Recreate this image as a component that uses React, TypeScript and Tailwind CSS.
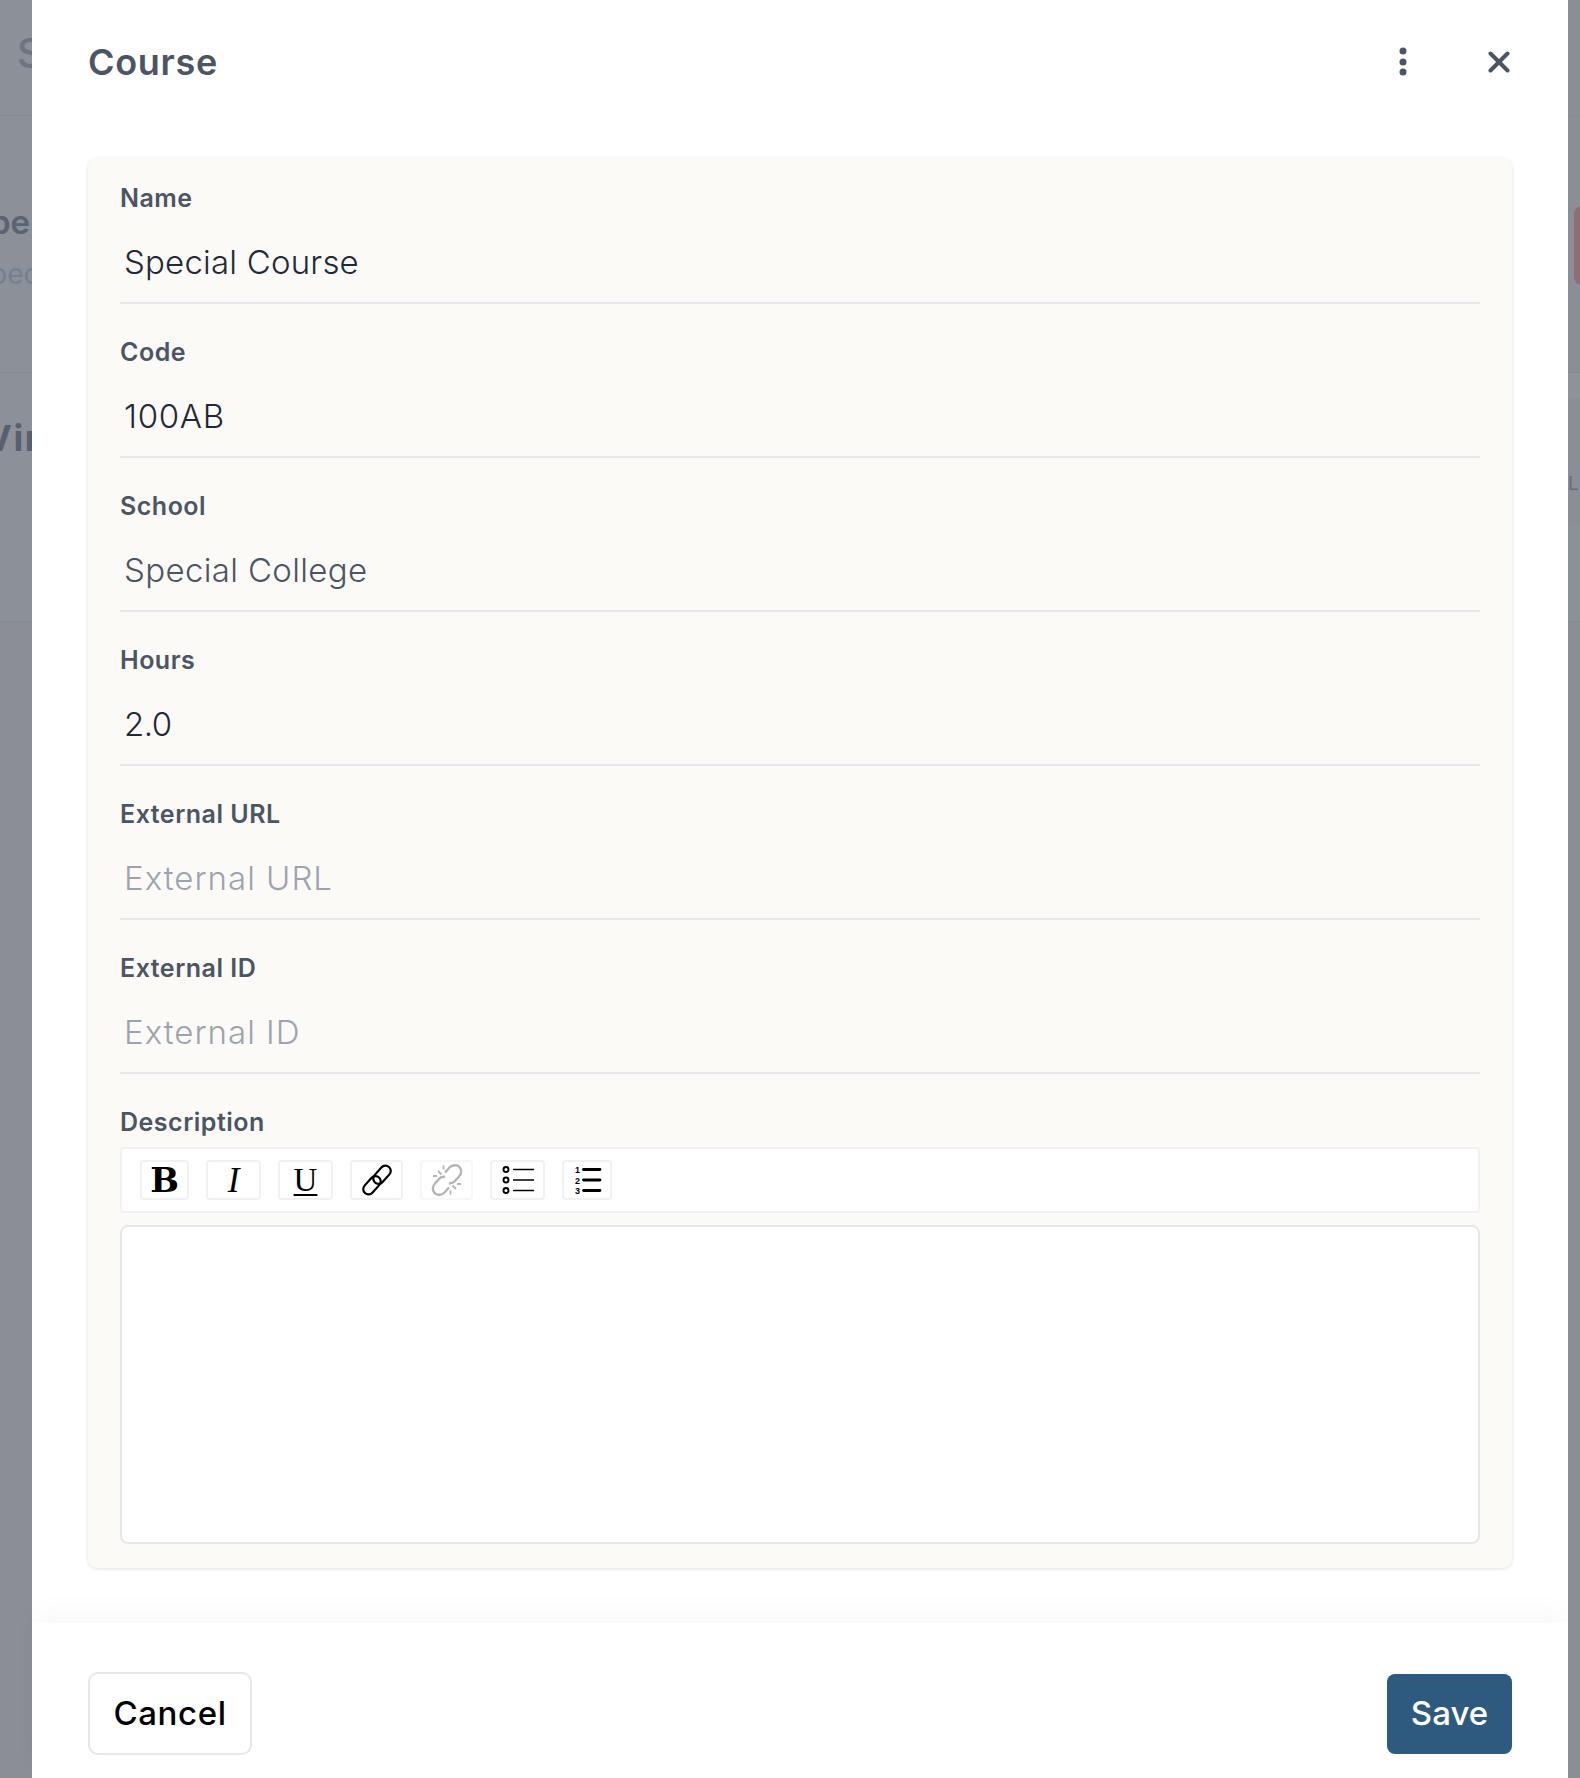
const font = "font-['Inter',sans-serif]";

const fields = [
  { label: "Name", value: "Special Course", tone: "text-[#1f2937] tracking-[0.2px]" },
  { label: "Code", value: "100AB", tone: "text-[#1f2937] tracking-[0.7px]" },
  { label: "School", value: "Special College", tone: "text-[#4b5563] tracking-[0.35px]" },
  { label: "Hours", value: "2.0", tone: "text-[#1f2937] tracking-[-0.5px]" },
  { label: "External URL", value: "External URL", tone: "text-[#9ca3af] tracking-[1px]" },
  { label: "External ID", value: "External ID", tone: "text-[#9ca3af] tracking-[1px]" },
];

function Field({ label, value, tone }: { label: string; value: string; tone: string }) {
  return (
    <div className="mb-[31px]">
      <div className="flex h-[34px] items-center pt-[1px] text-[25px] font-semibold tracking-[0.5px] text-[#4b5563]">{label}</div>
      <div className={`flex h-[89px] items-center border-b-2 border-[#e5e7eb] pt-[9px] pl-[4px] text-[33px] font-light ${tone}`}>
        {value}
      </div>
    </div>
  );
}

function ToolButton({ className, children }: { className: string; children: React.ReactNode }) {
  return (
    <div className={`flex h-[40px] items-center justify-center rounded-[4px] border-2 border-[#f1f1f1] bg-white text-black ${className}`}>
      {children}
    </div>
  );
}

function Toolbar() {
  return (
    <div className="flex h-[66px] items-center gap-[17px] rounded-[4px] border-2 border-[#f1f1f1] bg-white pl-[18px]">
      <ToolButton className="w-[49px] font-['DejaVu_Serif',serif] text-[34px] leading-none font-bold">B</ToolButton>
      <ToolButton className="w-[55px] font-['Liberation_Serif',serif] text-[35px] leading-none italic">I</ToolButton>
      <ToolButton className="w-[55px] font-['Liberation_Serif',serif] text-[33px] leading-none underline decoration-2 underline-offset-[3px]">U</ToolButton>
      <ToolButton className="w-[53px]">
        <svg width="34" height="34" viewBox="0 0 34 34" fill="none" stroke="#000" strokeWidth="2.200">
          <rect x="1.500" y="17" width="21" height="10.500" rx="5.250" transform="rotate(-48 12 22.250)" />
          <rect x="11.500" y="6.500" width="21" height="10.500" rx="5.250" transform="rotate(-48 22 11.750)" />
        </svg>
      </ToolButton>
      <ToolButton className="w-[53px] border-[#f7f7f7]">
        <svg width="36" height="36" viewBox="0 0 36 36" fill="none" stroke="#b4b4b4" strokeWidth="2.400">
          <path d="M16 10.500l4.500-5c3-3 7.500-3 10-.5s2 7-.5 9.500l-4.500 5c-1.500 1.500-3.500 2-5.500 1.500" />
          <path d="M20 25.500l-4.500 5c-3 3-7.500 3-10 .5s-2-7 .5-9.500l4.500-5c1.500-1.500 3.500-2 5.500-1.500" />
          <path strokeWidth="1.800" d="M9 9l3.500 3.500M14.500 3.500v4M4 14h4M27 27l-3.500-3.500M21.500 32.500v-4M32 22h-4" />
        </svg>
      </ToolButton>
      <ToolButton className="w-[55px]">
        <svg width="34" height="30" viewBox="0 0 34 30" fill="none" stroke="#000">
          <circle cx="5" cy="4.500" r="2.500" strokeWidth="1.900" />
          <circle cx="5" cy="15" r="2.500" strokeWidth="1.900" />
          <circle cx="5" cy="25.500" r="2.500" strokeWidth="1.900" />
          <path strokeWidth="1.600" d="M12 4.500h21M12 15h21M12 25.500h21" />
        </svg>
      </ToolButton>
      <ToolButton className="w-[50px]">
        <svg width="32" height="30" viewBox="0 0 32 30" fill="none" stroke="#000">
          <text x="4" y="8" fontSize="9" fontWeight="700" fill="#000" stroke="none" fontFamily="Liberation Sans Narrow, Liberation Sans, sans-serif">1</text>
          <text x="4" y="18.500" fontSize="9" fontWeight="700" fill="#000" stroke="none" fontFamily="Liberation Sans Narrow, Liberation Sans, sans-serif">2</text>
          <text x="4" y="29" fontSize="9" fontWeight="700" fill="#000" stroke="none" fontFamily="Liberation Sans Narrow, Liberation Sans, sans-serif">3</text>
          <path strokeWidth="2.800" strokeLinecap="round" d="M12.500 4.500h16.500M12.500 15h16.500M12.500 25.500h16.500" />
        </svg>
      </ToolButton>
    </div>
  );
}

function LeftBackdrop() {
  return (
    <div className="flex w-8 shrink-0 flex-col overflow-hidden bg-[#8c9099] whitespace-nowrap">
      <div className="h-[116px] border-b border-[#868a93] pt-[33px] pl-[17px] text-[40px] leading-[40px] font-medium text-[#6b7483]">S</div>
      <div className="h-[257px] border-b border-[#868a93] pt-[86px]">
        <div className="-ml-[10px] text-[33px] leading-[40px] font-semibold text-[#5a6372]">pe</div>
        <div className="mt-[16px] -ml-[10px] text-[28px] leading-[32px] text-[#74808f]">pec</div>
      </div>
      <div className="h-[249px] border-b border-[#868a93] pt-[43px]">
        <div className="-ml-[15px] text-[36px] leading-[44px] font-bold tracking-[1.500px] text-[#56606f]">Vir</div>
      </div>
      <div className="flex-1 bg-[#8b8e97]" />
    </div>
  );
}

function RightBackdrop() {
  return (
    <div className="flex w-3 shrink-0 flex-col overflow-hidden bg-[#8b8e97] whitespace-nowrap">
      <div className="h-[116px] border-b border-[#868a93]" />
      <div className="h-[257px] border-b border-[#868a93] pt-[90px] pl-[6px]">
        <div className="h-[79px] w-4 rounded-[8px] bg-[#8d6f6f]" />
      </div>
      <div className="h-[24px] bg-[#8e929b]" />
      <div className="h-[128px] pt-[74px] text-[19px] leading-[26px] text-[#666d7a]">LE</div>
      <div className="h-[97px] border-b border-[#868a93] bg-[#8b9199]" />
      <div className="flex-1" />
    </div>
  );
}

export default function App() {
  return (
    <div className={`flex h-[1778px] w-full overflow-hidden bg-[#8b8e97] ${font}`}>
      <LeftBackdrop />
      <div className="flex min-w-0 flex-1 flex-col bg-white">
        <div className="flex h-[158px] shrink-0 items-start justify-between pt-[40px] pr-[56px] pl-[56px]">
          <h1 className="text-[36px] leading-[44px] font-semibold tracking-[0.7px] text-[#4b5563]">Course</h1>
          <div className="flex items-center gap-[81px] pt-[7px] pr-[2px]">
            <svg width="8" height="30" viewBox="0 0 8 30" fill="#4b5563">
              <circle cx="4" cy="4" r="3.500" />
              <circle cx="4" cy="15" r="3.500" />
              <circle cx="4" cy="25" r="3.500" />
            </svg>
            <svg width="22" height="22" viewBox="0 0 22 22" fill="none" stroke="#4b5563" strokeWidth="4" strokeLinecap="round">
              <path d="M2.500 2.500l17 17M19.500 2.500l-17 17" />
            </svg>
          </div>
        </div>

        <div className="mx-[56px] h-[1410px] shrink-0 rounded-[10px] bg-[#fbfaf7] px-[32px] pt-[23px] shadow-[0_1px_4px_rgba(0,0,0,0.12)]">
          {fields.map((field) => (
            <Field key={field.label} {...field} />
          ))}
          <div className="flex h-[34px] items-center pt-[1px] text-[25px] font-semibold tracking-[0.5px] text-[#4b5563]">Description</div>
          <div className="mt-[8px]">
            <Toolbar />
          </div>
          <div className="mt-[12px] h-[319px] rounded-[8px] border-2 border-[#e5e7eb] bg-white" />
        </div>

        <div className="h-[55px] shrink-0" />
        <div className="flex flex-1 items-start justify-between px-[56px] pt-[49px] shadow-[0_-14px_24px_rgba(0,0,0,0.025)]">
          <button className="flex h-[83px] w-[164px] items-center justify-center rounded-[10px] border-2 border-[#e5e7eb] bg-white text-[33px] font-medium tracking-[0.6px] text-black">
            Cancel
          </button>
          <button className="mt-[2px] flex h-[80px] w-[125px] items-center justify-center rounded-[8px] bg-[#2f5a7f] text-[33px] font-medium text-white">
            Save
          </button>
        </div>
      </div>
      <RightBackdrop />
    </div>
  );
}
